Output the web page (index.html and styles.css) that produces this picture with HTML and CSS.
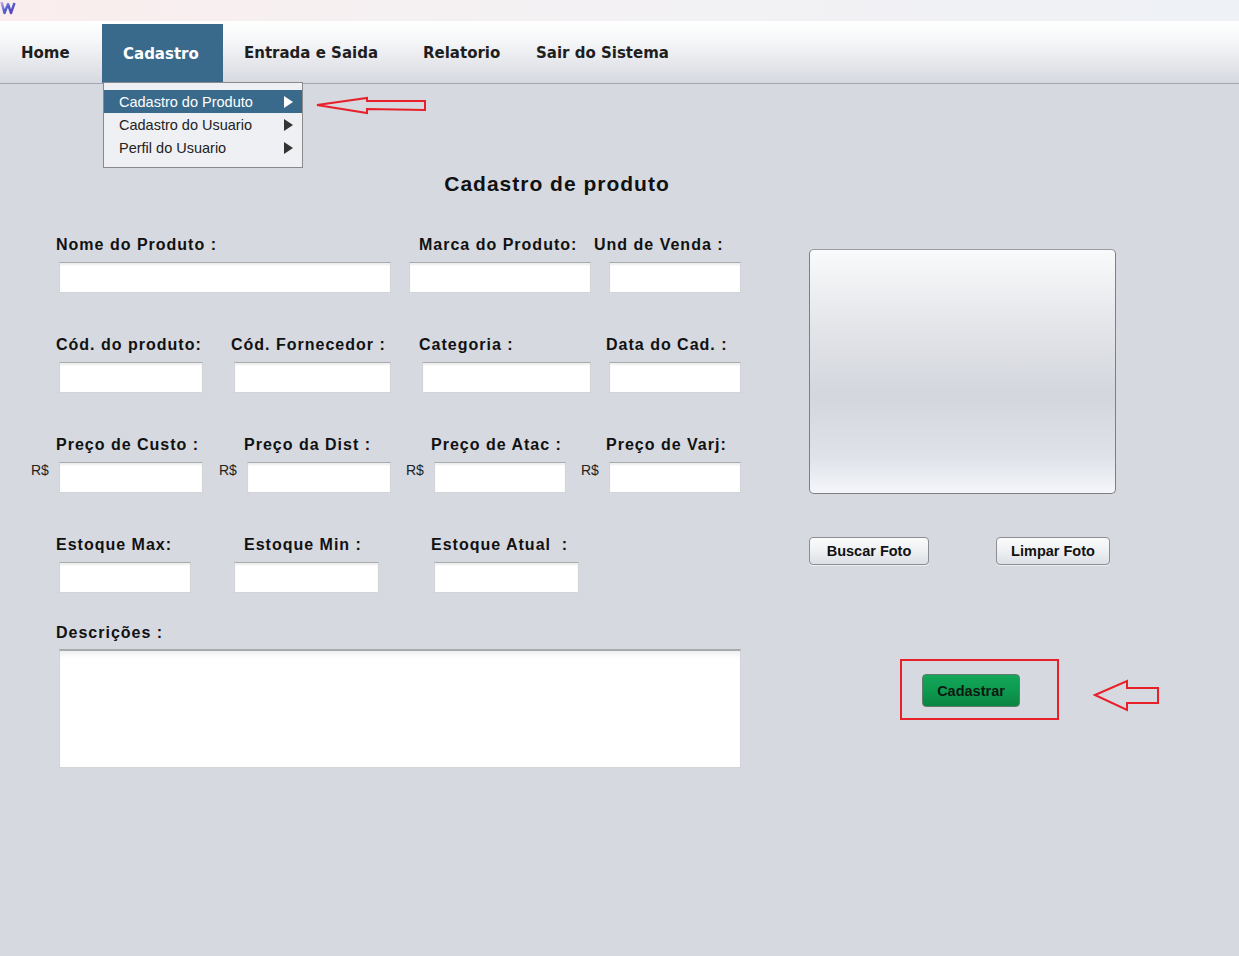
FILE: index.html
```html
<!DOCTYPE html>
<html lang="pt-BR">
<head>
<meta charset="utf-8">
<title>Cadastro de produto</title>
<link rel="stylesheet" href="styles.css">
</head>
<body>
<div class="titlebar">
  <svg class="logo" width="16" height="16" viewBox="0 0 16 16">
    <defs>
      <linearGradient id="lg" x1="0" y1="0" x2="1" y2="1">
        <stop offset="0" stop-color="#c9a6e6"/>
        <stop offset="0.5" stop-color="#4a5fd0"/>
        <stop offset="1" stop-color="#6a3fb0"/>
      </linearGradient>
    </defs>
    <path d="M1.5 2 L4.5 13 L8 4 L11 13 L14.5 3" fill="none" stroke="url(#lg)" stroke-width="2.4" stroke-linejoin="round"/>
  </svg>
</div>

<nav class="menubar">
  <div class="menu-item m-home">Home</div>
  <div class="menu-item m-cad active">Cadastro
    <ul class="dropdown">
      <li class="dd-item selected"><span>Cadastro do Produto</span><i class="tri"></i></li>
      <li class="dd-item"><span>Cadastro do Usuario</span><i class="tri"></i></li>
      <li class="dd-item"><span>Perfil do Usuario</span><i class="tri"></i></li>
    </ul>
  </div>
  <div class="menu-item m-es">Entrada e Saida</div>
  <div class="menu-item m-rel">Relatorio</div>
  <div class="menu-item m-sair">Sair do Sistema</div>
</nav>

<main class="page">
  <h1 class="title">Cadastro de produto</h1>
  <div class="workspace">
    <section class="form">
      <div class="row">
        <div class="labels">
          <span class="lbl lw363">Nome do Produto :</span>
          <span class="lbl lw175">Marca do Produto:</span>
          <span class="lbl">Und de Venda :</span>
        </div>
        <div class="inputs">
          <div class="field f-nome"></div>
          <div class="field f-marca"></div>
          <div class="field f-und"></div>
        </div>
      </div>

      <div class="row">
        <div class="labels">
          <span class="lbl lw175">Cód. do produto:</span>
          <span class="lbl lw188">Cód. Fornecedor :</span>
          <span class="lbl lw187">Categoria :</span>
          <span class="lbl">Data do Cad. :</span>
        </div>
        <div class="inputs">
          <div class="field f-cod"></div>
          <div class="field f-forn"></div>
          <div class="field f-cat"></div>
          <div class="field f-data"></div>
        </div>
      </div>

      <div class="row">
        <div class="labels">
          <span class="lbl lw188">Preço de Custo :</span>
          <span class="lbl lw187">Preço da Dist :</span>
          <span class="lbl lw175">Preço de Atac :</span>
          <span class="lbl">Preço de Varj:</span>
        </div>
        <div class="inputs money-row">
          <div class="money"><span class="cur">R$</span><div class="field f-custo"></div></div>
          <div class="money g-dist"><span class="cur">R$</span><div class="field f-dist"></div></div>
          <div class="money g-atac"><span class="cur">R$</span><div class="field f-atac"></div></div>
          <div class="money g-varj"><span class="cur">R$</span><div class="field f-varj"></div></div>
        </div>
      </div>

      <div class="row">
        <div class="labels">
          <span class="lbl lw188">Estoque Max:</span>
          <span class="lbl lw187">Estoque Min :</span>
          <span class="lbl">Estoque Atual &nbsp;:</span>
        </div>
        <div class="inputs">
          <div class="field f-max"></div>
          <div class="field f-min"></div>
          <div class="field f-atual"></div>
        </div>
      </div>

      <div class="row desc-row">
        <div class="labels">
          <span class="lbl">Descrições :</span>
        </div>
        <div class="inputs">
          <div class="field area"></div>
        </div>
      </div>
    </section>

    <aside class="side">
      <div class="photo"></div>
      <div class="photo-buttons">
        <button class="btn b-buscar">Buscar Foto</button>
        <button class="btn b-limpar">Limpar Foto</button>
      </div>
      <div class="submit-frame">
        <button class="btn-green">Cadastrar</button>
      </div>
    </aside>
  </div>
</main>

<svg class="mark mark-menu" width="114" height="20" viewBox="0 0 114 20">
  <polygon points="2,9 52,2 52,5 110,5 110,14 52,13 52,17" fill="none" stroke="#e8202a" stroke-width="2" stroke-linejoin="miter"/>
</svg>
<svg class="mark mark-btn" width="68" height="34" viewBox="0 0 68 34">
  <polygon points="2,16 34,2 34,9 65,9 65,24 34,24 34,31" fill="none" stroke="#e8202a" stroke-width="2"/>
</svg>
</body>
</html>
```

FILE: styles.css
```css
* { box-sizing: border-box; }

html, body {
  margin: 0;
  padding: 0;
}

body {
  background: #d6d9e0;
  font-family: "Liberation Sans", Arial, sans-serif;
  color: #111;
  width: 1239px;
  min-height: 956px;
  overflow: hidden;
}

/* top strip */
.titlebar {
  height: 22px;
  background: linear-gradient(90deg, #faeded 0%, #f4f1f3 40%, #eef1f6 100%);
  border-bottom: 1px solid #ffffff;
}
.logo { display: block; }

/* menu bar */
.menubar {
  height: 62px;
  display: flex;
  background: linear-gradient(180deg, #ffffff 0%, #f4f5f7 35%, #d6d9e0 100%);
  border-bottom: 1px solid #a3a6ad;
  font-family: "DejaVu Sans", Verdana, sans-serif;
  font-weight: bold;
  font-size: 15px;
  color: #1e1e1e;
}
.menu-item {
  display: flex;
  align-items: center;
  padding-left: 21px;
  height: 61px;
  white-space: nowrap;
}
.m-home { width: 102px; }
.m-cad  { width: 121px; }
.m-es   { width: 179px; }
.m-rel  { width: 113px; }
.m-sair { width: auto; }

.menu-item.active {
  position: relative;
  margin-top: 2px;
  height: 59px;
  background: #396a8b;
  color: #fff;
}

/* dropdown */
.dropdown {
  position: absolute;
  left: 1px;
  top: 58px;
  width: 200px;
  height: 86px;
  margin: 0;
  padding: 7px 0 0 0;
  list-style: none;
  background: #eef0f4;
  border: 1px solid #8a8a8a;
  font-family: "Liberation Sans", Arial, sans-serif;
  font-weight: normal;
  font-size: 14.5px;
  color: #222;
  z-index: 5;
}
.dd-item {
  height: 23px;
  display: flex;
  align-items: center;
  justify-content: space-between;
  padding: 0 9px 0 15px;
}
.dd-item.selected {
  background: #396a8b;
  color: #fff;
}
.tri {
  display: block;
  width: 0;
  height: 0;
  border-left: 9px solid #333;
  border-top: 6px solid transparent;
  border-bottom: 6px solid transparent;
}
.selected .tri { border-left-color: #fff; }

/* page */
.page { position: relative; }

.title {
  margin: 87px 0 0 0;
  width: 1114px;
  height: 26px;
  line-height: 26px;
  text-align: center;
  font-size: 21px;
  font-weight: bold;
  letter-spacing: 1px;
  color: #111;
}

.workspace {
  display: flex;
  margin-top: 37px;
}

.form { flex: 0 0 809px; }

.row { margin-bottom: 41px; }
.row.desc-row { margin-top: -12px; }

.labels {
  display: flex;
  padding-left: 56px;
  padding-top: 1px;
  height: 21px;
  line-height: 20px;
}
.lbl {
  font-size: 16px;
  font-weight: bold;
  letter-spacing: 1px;
  white-space: nowrap;
  color: #111;
}
.lw363 { width: 363px; }
.lw175 { width: 175px; }
.lw188 { width: 188px; }
.lw187 { width: 187px; }

.inputs {
  display: flex;
  margin-top: 7px;
  padding-left: 59px;
}
.desc-row .inputs { margin-top: 6px; }

.field {
  height: 31px;
  background: #fff;
  border: 1px solid #d2d4d8;
  border-top-color: #a9abaf;
  box-shadow: inset 0 2px 2px rgba(0, 0, 0, 0.07);
}

.f-nome  { width: 332px; }
.f-marca { width: 182px; margin-left: 18px; }
.f-und   { width: 132px; margin-left: 18px; }

.f-cod  { width: 144px; }
.f-forn { width: 157px; margin-left: 31px; }
.f-cat  { width: 169px; margin-left: 31px; }
.f-data { width: 132px; margin-left: 18px; }

.money-row { padding-left: 31px; }
.money { display: flex; align-items: flex-start; }
.cur {
  width: 28px;
  font-size: 14px;
  line-height: 16px;
  color: #222;
}
.g-dist { margin-left: 16px; }
.g-atac { margin-left: 15px; }
.g-varj { margin-left: 15px; }
.f-custo { width: 144px; }
.f-dist  { width: 144px; }
.f-atac  { width: 132px; }
.f-varj  { width: 132px; }

.f-max   { width: 132px; }
.f-min   { width: 145px; margin-left: 43px; }
.f-atual { width: 145px; margin-left: 55px; }

.area {
  width: 682px;
  height: 119px;
  border-top: 2px solid #a7a9ad;
  box-shadow: inset 0 6px 6px -3px rgba(0, 0, 0, 0.08);
}

/* side column */
.side {
  padding-top: 15px;
  width: 320px;
}
.photo {
  width: 307px;
  height: 245px;
  border: 1px solid #7d7f83;
  border-top-color: #9a9ca0;
  border-radius: 5px;
  background: linear-gradient(180deg, #f9fafb 0%, #e4e6ea 30%, #d3d6dd 60%, #dfe2e8 85%, #f4f6fb 100%);
}
.photo-buttons {
  display: flex;
  margin-top: 43px;
}
.btn {
  height: 28px;
  padding: 0;
  font-family: "Liberation Sans", Arial, sans-serif;
  font-size: 14.5px;
  font-weight: bold;
  color: #111;
  border: 1px solid #8c8e92;
  border-radius: 4px;
  background: linear-gradient(180deg, #fbfbfc 0%, #eef0f2 50%, #dcdfe5 100%);
  box-shadow: 0 1px 0 rgba(255,255,255,0.6);
}
.b-buscar { width: 120px; }
.b-limpar { width: 114px; margin-left: 67px; }

.submit-frame {
  margin-top: 94px;
  margin-left: 91px;
  width: 159px;
  height: 61px;
  border: 2px solid #e8202a;
  padding: 13px 0 0 20px;
}
.btn-green {
  width: 98px;
  height: 33px;
  padding: 0;
  font-family: "Liberation Sans", Arial, sans-serif;
  font-size: 14.5px;
  font-weight: bold;
  color: #0c1a10;
  border: 1px solid #5f7d6a;
  border-radius: 4px;
  background: linear-gradient(180deg, #13a65a 0%, #0e9a4f 50%, #0a8443 100%);
}

/* annotation marks */
.mark {
  position: absolute;
  display: block;
}
.mark-menu { left: 315px; top: 96px; }
.mark-btn  { left: 1093px; top: 679px; }
```
